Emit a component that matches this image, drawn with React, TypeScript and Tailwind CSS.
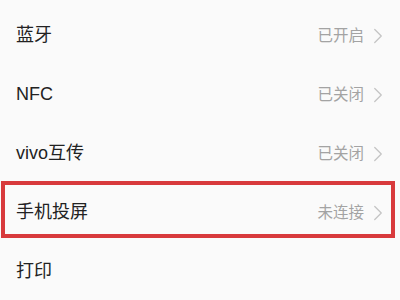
import { ChevronRight } from "lucide-react";

const rows = [
  { name: "蓝牙", value: "已开启" },
  { name: "NFC", value: "已关闭" },
  { name: "vivo互传", value: "已关闭" },
  { name: "手机投屏", value: "未连接", marked: true },
  { name: "打印", value: "" },
];

export default function App() {
  return (
    <div
      className="w-[400px] h-[300px] overflow-hidden bg-[#fafafa] pt-[6px]"
      style={{ fontFamily: '"Liberation Sans", "Noto Sans CJK SC", sans-serif' }}
    >
      {rows.map((row) => (
        <div key={row.name} className="relative flex items-center h-[59px] pl-4 pr-[9px]">
          <span className="flex-1 text-[18px] text-[#222]">{row.name}</span>
          {row.value && (
            <span className="flex items-center gap-[1px] text-[15.5px] text-[#a3a3a3]">
              {row.value}
              <ChevronRight size={26} strokeWidth={1.2} className="text-[#c4c4c4]" />
            </span>
          )}
          {row.marked && (
            <div className="absolute left-[1px] right-[5px] top-[-2px] bottom-[4px] border-[4px] border-[#d83a3c] pointer-events-none" />
          )}
        </div>
      ))}
    </div>
  );
}
